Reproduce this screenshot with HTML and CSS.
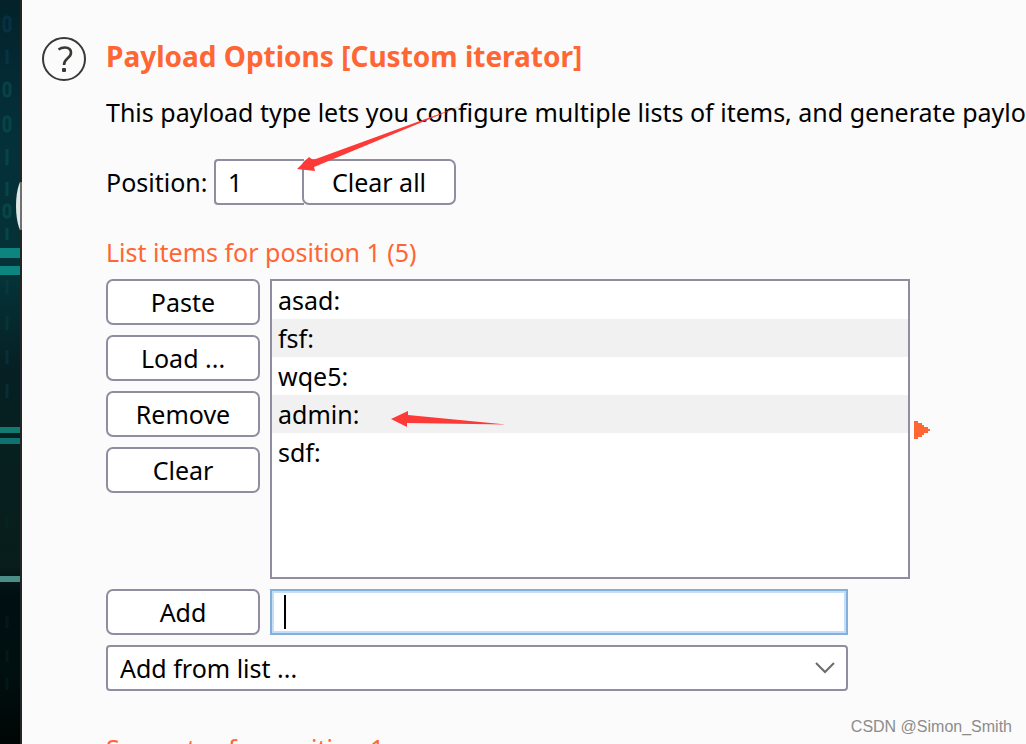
FILE: index.html
```html
<!DOCTYPE html>
<html lang="en">
<head>
    <meta charset="UTF-8">
    <meta name="viewport" content="width=device-width, initial-scale=1.0">
    <title>Payload Options</title>
    <link rel="stylesheet" href="styles.css">
</head>
<body>
    <!-- Desktop wallpaper showing beside the window -->
    <div class="wallpaper" aria-hidden="true">
        <svg width="22" height="744" viewBox="0 0 22 744">
            <g fill="none" stroke-width="3" opacity="0.4">
                <g stroke="#0d4664">
                    <rect x="4" y="17" width="6" height="14" rx="3"/>
                    <path d="M7 50v14"/>
                </g>
                <g stroke="#0b6462">
                    <rect x="4" y="83" width="6" height="13" rx="3"/>
                    <rect x="4" y="117" width="6" height="14" rx="3"/>
                    <path d="M7 149v16M7 182v14M7 228v12"/>
                    <rect x="4" y="205" width="6" height="12" rx="3"/>
                </g>
                <path d="M7 280v14M7 316v14M7 350v14M7 384v14" stroke="#0b4450"/>
                <path d="M7 516v12M7 616v12M7 650v12M7 678v12" stroke="#06282c"/>
            </g>
            <rect y="248" width="20" height="10" fill="#0c8580"/>
            <rect y="266" width="20" height="9" fill="#0c8580"/>
            <rect y="427" width="20" height="6" fill="#137a70"/>
            <rect y="438" width="20" height="6" fill="#0f7270"/>
            <rect y="576" width="20" height="6" fill="#4a8f85"/>
            <ellipse cx="26" cy="206" rx="10" ry="30" fill="#dfe6e6"/>
            <rect x="20" width="2" height="744" fill="#232625"/>
            <rect x="20" y="182" width="2" height="48" fill="#707272"/>
        </svg>
    </div>

    <main class="panel">
        <button class="help" aria-label="Help">
            <svg width="44" height="44" viewBox="0 0 44 44" fill="none" stroke="#3a3835">
                <circle cx="22" cy="22" r="21" stroke-width="2"/>
                <path d="M16.500 12.500c2-1.400 4.200-2 6.300-2 4 0 6.200 2 6.200 5.200 0 2.600-1.500 4-3.600 5.700-2.200 1.800-3.400 3-3.400 6.600" stroke-width="2.600"/>
                <rect x="20" y="31" width="4" height="4" rx="1" fill="#3a3835" stroke="none"/>
            </svg>
        </button>

        <div class="options">
            <h1>Payload Options [Custom iterator]</h1>
            <p class="description">This payload type lets you configure multiple lists of items, and generate payloads</p>

            <div class="position-row">
                <label for="position">Position:</label>
                <input type="text" id="position" value="1">
                <button class="btn clear-all">Clear all</button>
                <svg class="arrow arrow-position" width="166" height="68" viewBox="0 0 166 68" fill="#fd3a37">
                    <path d="M1 63L13 51L17 54L165 0L18 61L19 65z"/>
                </svg>
            </div>

            <h2>List items for position 1 (5)</h2>

            <div class="list-row">
                <div class="list-buttons">
                    <button class="btn">Paste</button>
                    <button class="btn">Load ...</button>
                    <button class="btn">Remove</button>
                    <button class="btn">Clear</button>
                </div>
                <ul class="items">
                    <li>asad:</li>
                    <li>fsf:</li>
                    <li>wqe5:</li>
                    <li>admin:
                        <svg class="arrow arrow-admin" width="116" height="18" viewBox="0 0 116 18" fill="#fd3a37">
                            <path d="M0 9L17 1V5L115 14.500L16 13V17z"/>
                        </svg>
                    </li>
                    <li>sdf:</li>
                </ul>
                <svg class="marker" width="16" height="20" viewBox="0 0 16 20" fill="#ff6633">
                    <path d="M0 2h4v2h4v2h2v2h4v2h2v2h-2v2h-4v2h-2v2h-4v2H0z"/>
                </svg>
            </div>

            <div class="entry">
                <button class="btn">Add</button>
                <input type="text" id="new-item" aria-label="New item">
            </div>

            <div class="entry from-list">
                <select id="from-list" aria-label="Add from list">
                    <option>Add from list ...</option>
                </select>
                <svg class="chevron" width="20" height="12" viewBox="0 0 20 12" fill="none" stroke="#6b6b6b" stroke-width="2">
                    <path d="M1 1l9 9 9-9"/>
                </svg>
            </div>

            <h2 class="separator">Separator for position 1</h2>
        </div>
    </main>

    <div class="watermark">CSDN @Simon_Smith</div>
</body>
</html>
```

FILE: styles.css
```css
* {
    margin: 0;
    padding: 0;
    box-sizing: border-box;
}

body {
    display: flex;
    height: 100vh;
    overflow: hidden;
    position: relative;
    background: #fbfbfb;
    color: #000;
    font-family: "Noto Sans", "Open Sans", sans-serif;
    font-size: 25px;
    line-height: 38px;
}

button, input, select {
    font: inherit;
    color: inherit;
}

.wallpaper {
    flex: none;
    width: 22px;
    background: linear-gradient(#03222a, #04303a 18%, #043237 38%, #061f23 50%, #06201f 62%, #081d1c 76%, #000f12 80%, #000f10 90%, #000605);
    overflow: hidden;
}

.wallpaper svg {
    display: block;
}

.panel {
    flex: 1;
    min-width: 0;
    display: flex;
    gap: 20px;
    padding: 37px 0 0 20px;
}

.help {
    flex: none;
    width: 44px;
    height: 44px;
    border: none;
    background: none;
    cursor: pointer;
}

.options {
    flex: 1;
    min-width: 0;
    padding-right: 96px;
}

h1 {
    font-size: 28px;
    line-height: 38px;
    color: #ff6633;
    white-space: nowrap;
}

h2 {
    font-size: 25px;
    font-weight: normal;
    line-height: 38px;
    color: #ff6633;
    white-space: nowrap;
}

.description {
    margin-top: 18px;
    white-space: nowrap;
}

.btn {
    flex: none;
    width: 154px;
    height: 46px;
    border: 2px solid #918da0;
    border-radius: 7px;
    background: #fff;
    line-height: 38px;
    cursor: pointer;
}

input, select {
    height: 46px;
    border: 2px solid #918da0;
    background: #fff;
    outline: none;
}

.position-row {
    position: relative;
    display: flex;
    align-items: center;
    margin: 28px 0;
}

.position-row label {
    width: 108px;
}

#position {
    width: 90px;
    padding-left: 12px;
    border-right: none;
    border-radius: 4px 0 0 4px;
}

.clear-all {
    margin-left: -2px;
}

.arrow {
    position: absolute;
    pointer-events: none;
}

.arrow-position {
    left: 190px;
    top: -53px;
}

.list-row {
    display: flex;
    margin-top: 8px;
}

.list-buttons {
    display: flex;
    flex-direction: column;
    gap: 10px;
    margin-right: 10px;
}

.items {
    flex: 1;
    height: 300px;
    border: 2px solid #918da0;
    background: #fff;
    list-style: none;
}

.items li {
    position: relative;
    height: 38px;
    padding-left: 6px;
}

.items li:nth-child(even) {
    background: #f1f1f1;
}

.arrow-admin {
    left: 119px;
    top: 15px;
}

.marker {
    align-self: center;
    margin-left: 4px;
}

.entry {
    display: flex;
    gap: 10px;
    margin-top: 10px;
    margin-right: 82px;
}

/* focused field with its text cursor */
#new-item {
    flex: 1;
    min-width: 0;
    padding: 0 14px;
    border-color: #86aedb;
    box-shadow: inset 0 0 0 2px #c6dff9;
    background: linear-gradient(#000, #000) 12px center / 2px 34px no-repeat #fff;
}

.from-list {
    position: relative;
}

#from-list {
    flex: 1;
    padding-left: 12px;
    border-radius: 4px;
    appearance: none;
}

.chevron {
    position: absolute;
    right: 13px;
    top: 17px;
    pointer-events: none;
}

.separator {
    margin-top: 38px;
}

.watermark {
    position: absolute;
    right: 14px;
    bottom: 7px;
    font-family: "Liberation Sans", sans-serif;
    font-size: 16px;
    line-height: 20px;
    color: #8c8c8c;
}
```
